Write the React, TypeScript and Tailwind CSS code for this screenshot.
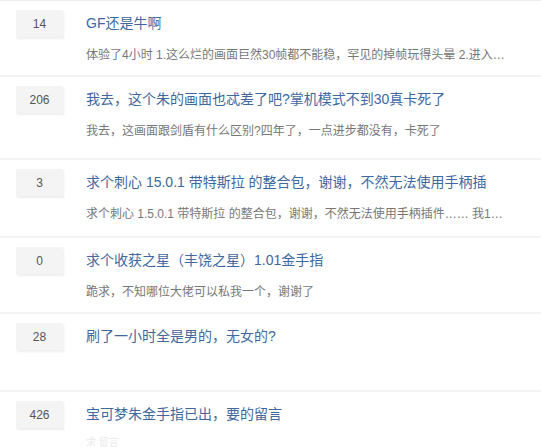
const topics = [
  {
    count: 14,
    title: "GF还是牛啊",
    excerpt:
      "体验了4小时 1.这么烂的画面巨然30帧都不能稳，罕见的掉帧玩得头晕 2.进入游戏后画面还是一样的卡顿",
    h: "h-[76px]",
  },
  {
    count: 206,
    title: "我去，这个朱的画面也忒差了吧?掌机模式不到30真卡死了",
    excerpt: "我去，这画面跟剑盾有什么区别?四年了，一点进步都没有，卡死了",
    h: "h-[83px]",
  },
  {
    count: 3,
    title: "求个刺心 15.0.1 带特斯拉 的整合包，谢谢，不然无法使用手柄插件",
    excerpt:
      "求个刺心 1.5.0.1 带特斯拉 的整合包，谢谢，不然无法使用手柄插件…… 我15.0.1的系统",
    h: "h-[78px]",
  },
  {
    count: 0,
    title: "求个收获之星（丰饶之星）1.01金手指",
    excerpt: "跪求，不知哪位大佬可以私我一个，谢谢了",
    h: "h-[76px]",
  },
  {
    count: 28,
    title: "刷了一小时全是男的，无女的?",
    excerpt: "",
    h: "h-[78px]",
  },
  {
    count: 426,
    title: "宝可梦朱金手指已出，要的留言",
    excerpt: "",
    h: "h-[60px]",
  },
];

export default function App() {
  return (
    <div
      className="w-[541px] h-[447px] overflow-hidden bg-white border-t border-[#eee]"
      style={{ fontFamily: '"Liberation Sans", "Noto Sans CJK SC", sans-serif' }}
    >
      {topics.map((t, i) => (
        <div
          key={i}
          className={`${t.h} flex border-b-2 border-[#f3f3f3] pt-[9px] pl-4`}
        >
          {/* reply count */}
          <div className="shrink-0 w-[47px] h-[27px] bg-[#f4f4f4] shadow-[1px_2px_2px_rgba(0,0,0,0.07)] flex items-center justify-center text-xs text-[#555]">
            {t.count}
          </div>
          <div className="ml-[23px] min-w-0">
            <div className="w-[408px] h-6 mt-[1px] overflow-hidden text-sm leading-6 text-[#40689f]">
              {t.title}
            </div>
            {t.excerpt && (
              <div className="w-[419px] mt-[10px] truncate text-xs leading-5 text-[#777]">
                {t.excerpt}
              </div>
            )}
            {i === 5 && (
              <div className="mt-[11px] text-[10px] leading-3 text-[#eaeaea]">
                求 留言
              </div>
            )}
          </div>
        </div>
      ))}
    </div>
  );
}
